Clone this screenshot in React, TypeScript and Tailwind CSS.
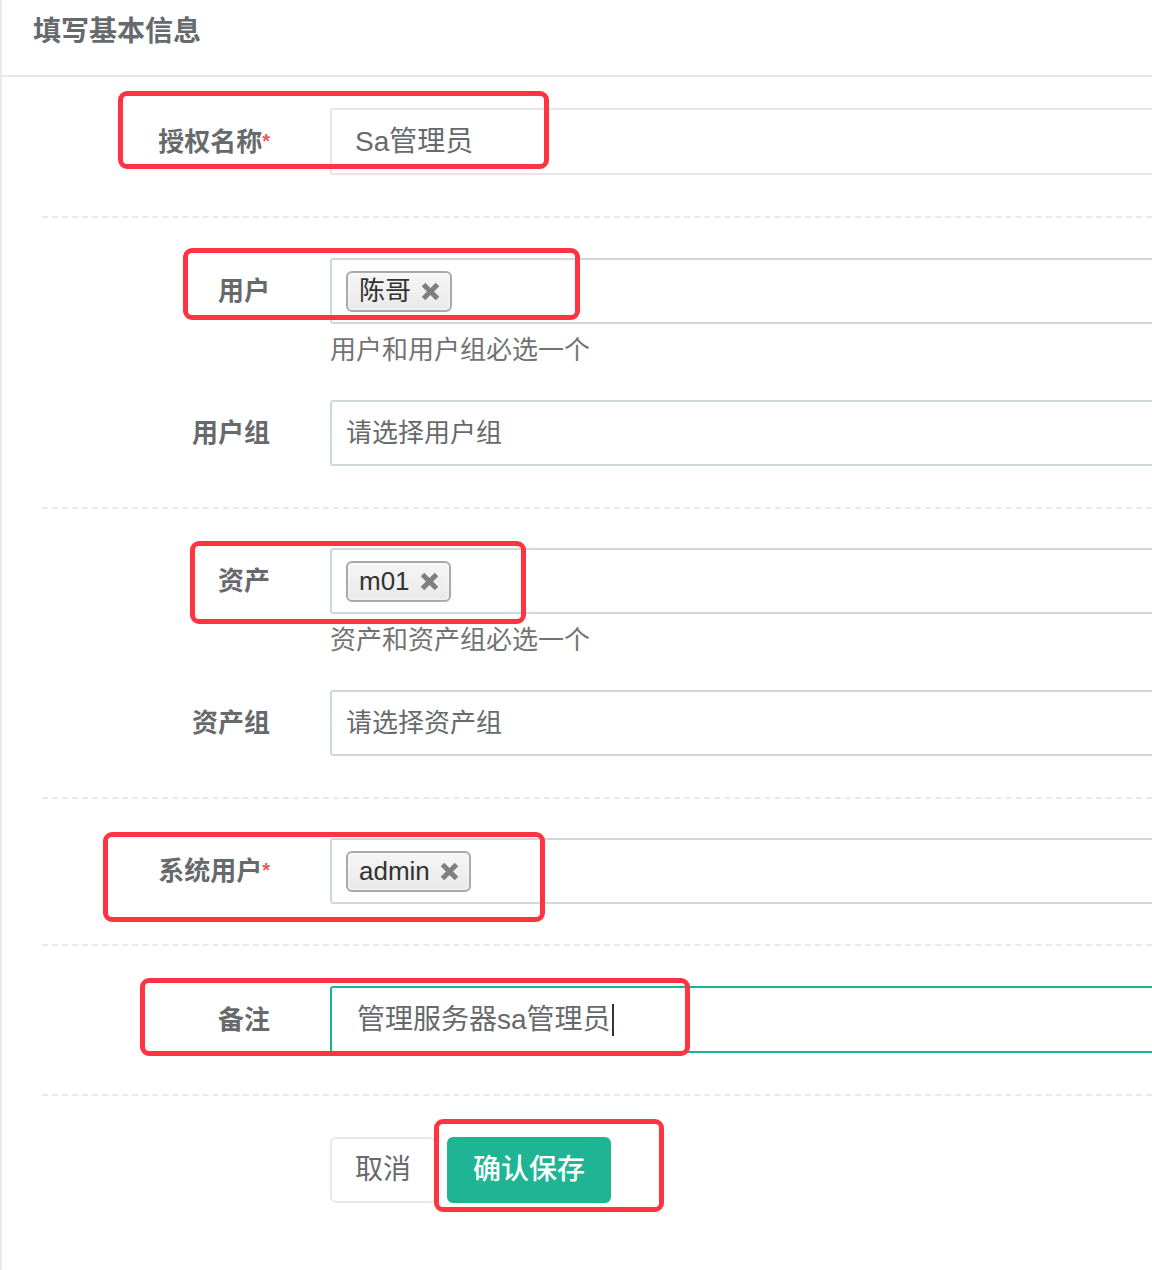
import React from "react"

const FONT = { fontFamily: '"Liberation Sans", "Noto Sans CJK SC", sans-serif' }

function XIcon() {
  return (
    <svg width="19" height="19" viewBox="0 0 19 19" className="shrink-0">
      <path d="M2.5 2.5 L16.5 16.5 M16.5 2.5 L2.5 16.5" stroke="#7f7f7f" strokeWidth="5" strokeLinecap="butt" />
    </svg>
  )
}

function Tag({ text }: { text: string }) {
  return (
    <div className="flex items-center h-[41px] pl-[11px] pr-[10px] gap-[10px] rounded-[6px] border-2 border-[#aaaaaa] bg-gradient-to-b from-[#f6f6f6] to-[#e9e9e9] shadow-[0_0_3px_#fff_inset] text-[26px] text-[#333]">
      <span className="leading-none">{text}</span>
      <XIcon />
    </div>
  )
}

function Label({ text, required }: { text: string; required?: boolean }) {
  return (
    <div className="w-[258px] shrink-0 pr-[30px] text-right text-[26px] font-bold text-[#676a6c] leading-none">
      {text}
      {required && <span className="text-[#ed5565] text-[20px] align-top relative top-[2px]">*</span>}
    </div>
  )
}

function Row({ label, required, children, boxClass = "border-[#cfd8dc]", h = "h-[66px]" }: {
  label: string
  required?: boolean
  children?: React.ReactNode
  boxClass?: string
  h?: string
}) {
  return (
    <div className="flex items-center">
      <Label text={label} required={required} />
      <div className={`ml-[30px] w-[900px] shrink-0 ${h} border-2 ${boxClass} rounded-[3px] flex items-center`}>
        {children}
      </div>
    </div>
  )
}

function Help({ text }: { text: string }) {
  return (
    <div className="ml-[288px] mt-[8px] mb-[32px] text-[26px] leading-[36px] text-[#737373]">{text}</div>
  )
}

function Dashed({ mt, mb }: { mt: string; mb: string }) {
  return <div className={`border-t-2 border-dashed border-[#e7eaec] ${mt} ${mb}`} />
}

function RedBox({ cls }: { cls: string }) {
  return <div className={`absolute border-[5px] border-[#ff3341] rounded-[9px] pointer-events-none ${cls}`} />
}

export default function App() {
  return (
    <div className="relative w-[1152px] h-[1270px] bg-white overflow-hidden" style={FONT}>
      <div className="h-full border-l-2 border-[#e7eaec]">
        <div className="h-[77px] border-b-2 border-[#e7eaec] pl-[31px] pt-[14px]">
          <h5 className="text-[28px] leading-[36px] font-bold text-[#676a6c]">填写基本信息</h5>
        </div>

        <div className="pt-[31px] pl-[40px]">
          <Row label="授权名称" required boxClass="border-[#e5e6e7]" h="h-[67px]">
            <span className="pl-[23px] text-[28px] text-[#676a6c]">Sa管理员</span>
          </Row>
          <Dashed mt="mt-[41px]" mb="mb-[40px]" />

          <Row label="用户">
            <div className="pl-[14px]">
              <Tag text="陈哥" />
            </div>
          </Row>
          <Help text="用户和用户组必选一个" />
          <Row label="用户组">
            <span className="pl-[14px] text-[26px] text-[#676a6c]">请选择用户组</span>
          </Row>
          <Dashed mt="mt-[41px]" mb="mb-[39px]" />

          <Row label="资产">
            <div className="pl-[14px]">
              <Tag text="m01" />
            </div>
          </Row>
          <Help text="资产和资产组必选一个" />
          <Row label="资产组">
            <span className="pl-[14px] text-[26px] text-[#676a6c]">请选择资产组</span>
          </Row>
          <Dashed mt="mt-[41px]" mb="mb-[39px]" />

          <Row label="系统用户" required>
            <div className="pl-[14px]">
              <Tag text="admin" />
            </div>
          </Row>
          <Dashed mt="mt-[40px]" mb="mb-[40px]" />

          <Row label="备注" boxClass="border-[#1ab394]" h="h-[67px]">
            <span className="pl-[25px] text-[28px] text-[#676a6c]">管理服务器sa管理员</span>
            <span className="w-[2px] h-[32px] bg-[#333] ml-[1px]" />
          </Row>
          <Dashed mt="mt-[41px]" mb="mb-[41px]" />

          <div className="flex ml-[288px] gap-[11px]">
            <button className="h-[66px] px-[23px] border-2 border-[#e7eaec] rounded-[6px] bg-white text-[28px] text-[#676a6c]">
              取消
            </button>
            <button className="h-[66px] px-[26px] rounded-[6px] bg-[#1fb594] text-[28px] font-medium text-white">
              确认保存
            </button>
          </div>
        </div>
      </div>

      <RedBox cls="left-[118px] top-[91px] w-[431px] h-[78px]" />
      <RedBox cls="left-[183px] top-[248px] w-[397px] h-[72px]" />
      <RedBox cls="left-[190px] top-[541px] w-[336px] h-[83px]" />
      <RedBox cls="left-[103px] top-[832px] w-[442px] h-[90px]" />
      <RedBox cls="left-[140px] top-[978px] w-[550px] h-[78px]" />
      <RedBox cls="left-[434px] top-[1119px] w-[230px] h-[93px]" />
    </div>
  )
}
